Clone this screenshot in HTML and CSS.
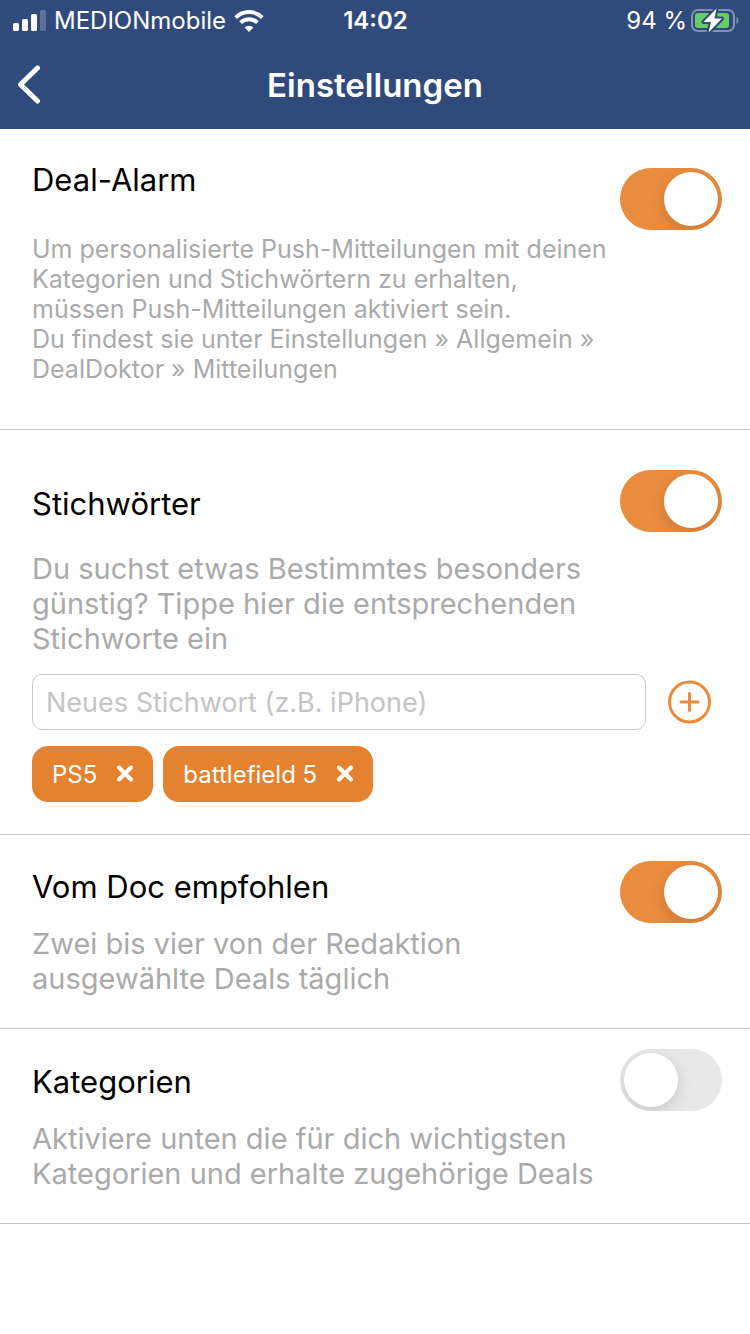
FILE: index.html
```html
<!DOCTYPE html>
<html lang="de">
<head>
<meta charset="utf-8">
<meta name="viewport" content="width=device-width, initial-scale=1">
<title>Einstellungen</title>
<link rel="stylesheet" href="styles.css">
</head>
<body>
<header class="header">
  <div class="status">
    <div class="status-left">
      <svg class="icon" width="34" height="22" viewBox="0 0 34 22" fill="#fff" aria-hidden="true">
        <rect x="1" y="13" width="6" height="8" rx="1.5"/>
        <rect x="10" y="9" width="6" height="12" rx="1.5"/>
        <rect x="19" y="4" width="6" height="17" rx="1.5"/>
        <rect x="28" y="0" width="6" height="21" rx="1.5" opacity=".22"/>
      </svg>
      <span class="carrier">MEDIONmobile</span>
      <svg class="icon" width="30" height="22" viewBox="0 0 30 22" aria-hidden="true">
        <g fill="none" stroke="#fff" stroke-width="4">
          <path d="M1.7 7.6a18.8 18.8 0 0 1 26.6 0"/>
          <path d="M6.600 12.600a11.900 11.900 0 0 1 16.800 0"/>
        </g>
        <path d="M15 22l-4.400-4.600a6.400 6.400 0 0 1 8.800 0z" fill="#fff"/>
      </svg>
    </div>
    <time class="clock">14:02</time>
    <div class="status-right">
      <span>94 %</span>
      <svg class="icon" width="48" height="26" viewBox="0 0 48 26" aria-hidden="true">
        <rect x="1" y="2" width="42" height="21" rx="6" fill="none" stroke="#8292b1" stroke-width="2"/>
        <path d="M45.500 9v7c2.500-1 2.500-6 0-7z" fill="#8292b1"/>
        <rect x="4" y="5" width="34" height="15" rx="3" fill="#65cf65"/>
        <path d="M25.500 0.500L12.500 14h7.500L17.500 24.500 31 10.500h-7.500z" fill="#fff" stroke="#304b7b" stroke-width="4" stroke-linejoin="round" paint-order="stroke"/>
      </svg>
    </div>
  </div>
  <div class="nav">
    <button class="back" type="button" aria-label="Zurück">
      <svg class="icon" width="24" height="40" viewBox="0 0 24 40" fill="none" stroke="#fff" stroke-width="5" stroke-linecap="round" stroke-linejoin="round" aria-hidden="true"><path d="M20.500 3L3.500 19.500 20.500 36"/></svg>
    </button>
    <h1 class="page-title">Einstellungen</h1>
  </div>
</header>
<main>
  <section class="setting setting-alarm">
    <div class="setting-text">
      <h2 class="setting-title"><label for="alarm">Deal-Alarm</label></h2>
      <p class="note">Um personalisierte Push-Mitteilungen mit deinen<br>Kategorien und Stichwörtern zu erhalten,<br>müssen Push-Mitteilungen aktiviert sein.<br>Du findest sie unter Einstellungen » Allgemein »<br>DealDoktor » Mitteilungen</p>
    </div>
    <input class="toggle" type="checkbox" role="switch" id="alarm" checked>
  </section>
  <section class="setting setting-keywords">
    <div class="setting-text">
      <h2 class="setting-title"><label for="keywords">Stichwörter</label></h2>
      <p class="description">Du suchst etwas Bestimmtes besonders<br>günstig? Tippe hier die entsprechenden<br>Stichworte ein</p>
    </div>
    <input class="toggle" type="checkbox" role="switch" id="keywords" checked>
    <form class="keyword-form">
      <input class="keyword-input" type="text" aria-label="Neues Stichwort" placeholder="Neues Stichwort (z.B. iPhone)">
      <button class="add" type="button" aria-label="Hinzufügen">
        <svg class="icon" width="44" height="44" viewBox="0 0 44 44" fill="none" stroke="#ea8c3c" stroke-width="3" stroke-linecap="round" aria-hidden="true"><circle cx="21.500" cy="22" r="20"/><path d="M13 22h17M21.500 13.500v17"/></svg>
      </button>
    </form>
    <div class="chips">
      <button class="chip" type="button">PS5
        <svg class="icon" width="18" height="18" viewBox="0 0 18 18" stroke="#fff" stroke-width="4" stroke-linecap="round" aria-hidden="true"><path d="M3 2.500l12 12M15 2.500L3 14.500"/></svg>
      </button>
      <button class="chip" type="button">battlefield 5
        <svg class="icon" width="18" height="18" viewBox="0 0 18 18" stroke="#fff" stroke-width="4" stroke-linecap="round" aria-hidden="true"><path d="M3 2.500l12 12M15 2.500L3 14.500"/></svg>
      </button>
    </div>
  </section>
  <section class="setting setting-doc">
    <div class="setting-text">
      <h2 class="setting-title"><label for="doc">Vom Doc empfohlen</label></h2>
      <p class="description">Zwei bis vier von der Redaktion<br>ausgewählte Deals täglich</p>
    </div>
    <input class="toggle" type="checkbox" role="switch" id="doc" checked>
  </section>
  <section class="setting setting-categories">
    <div class="setting-text">
      <h2 class="setting-title"><label for="categories">Kategorien</label></h2>
      <p class="description">Aktiviere unten die für dich wichtigsten<br>Kategorien und erhalte zugehörige Deals</p>
    </div>
    <input class="toggle" type="checkbox" role="switch" id="categories">
  </section>
</main>
</body>
</html>
```
FILE: styles.css
```css
* {
  box-sizing: border-box;
}

body {
  margin: 0;
  background: #fff;
  color: #000;
  font-family: Inter, "Liberation Sans", sans-serif;
}

h1, h2, p {
  margin: 0;
}

button, input {
  margin: 0;
  font-family: inherit;
}

button {
  border: 0;
  padding: 0;
  background: none;
  cursor: pointer;
}

.icon {
  display: block;
  flex: none;
}

.header {
  background: #304b7b;
  color: #fff;
}

.status,
.nav {
  display: grid;
  grid-template-columns: 1fr auto 1fr;
  align-items: center;
}

.status {
  height: 41px;
  padding: 0 11px 0 12px;
  font-size: 24px;
  line-height: 40px;
}

.status-left,
.status-right {
  display: flex;
  align-items: center;
  gap: 8px;
}

.status-right {
  justify-content: flex-end;
  gap: 4px;
}

.clock {
  font-weight: 600;
}

.nav {
  height: 88px;
  padding: 0 17px;
}

.back {
  justify-self: start;
}

.page-title {
  font-size: 33px;
  font-weight: 600;
  line-height: 40px;
}

.setting {
  display: grid;
  grid-template-columns: 1fr auto;
  align-items: start;
  padding: 32px 28px 32px 32px;
  border-bottom: 1px solid #c8c8c8;
}

.setting-title {
  margin-bottom: 19px;
  font-size: 31px;
  font-weight: 400;
  line-height: 40px;
}

.note {
  color: #aaa;
  font-size: 25px;
  line-height: 30px;
}

.description {
  color: #aaa;
  font-size: 29px;
  line-height: 35px;
}

.setting-alarm {
  padding-top: 31px;
  padding-bottom: 45px;
}

.setting-alarm .setting-title {
  margin-bottom: 34px;
}

.setting-alarm .toggle {
  margin-top: 8px;
}

.setting-keywords {
  padding-top: 40px;
}

.setting-keywords .setting-text {
  padding-top: 14px;
}

.setting-keywords .setting-title {
  margin-bottom: 27px;
}

.setting-doc {
  padding-top: 26px;
}

.setting-doc .setting-text {
  padding-top: 6px;
}

.setting-categories {
  padding-top: 20px;
}

.setting-categories .setting-text {
  padding-top: 13px;
}

.toggle {
  display: flex;
  appearance: none;
  width: 102px;
  height: 62px;
  padding: 4px;
  border-radius: 31px;
  overflow: hidden;
  background: #e8e8e8;
  cursor: pointer;
}

.toggle::before {
  content: "";
  width: 54px;
  height: 54px;
  border-radius: 50%;
  background: #fff;
  box-shadow: 0 5px 16px rgba(0, 0, 0, .14);
}

.toggle:checked {
  justify-content: flex-end;
  background: #ea8c3e;
}

.keyword-form {
  grid-column: 1 / -1;
  display: flex;
  align-items: center;
  gap: 22px;
  margin-top: 18px;
  padding-right: 10px;
}

.keyword-input {
  flex: 1;
  min-width: 0;
  height: 56px;
  padding: 0 13px;
  border: 1px solid #c8c8c8;
  border-radius: 10px;
  background: #fff;
  font-size: 27px;
}

.keyword-input::placeholder {
  color: #c4c4c4;
}

.chips {
  grid-column: 1 / -1;
  display: flex;
  flex-wrap: wrap;
  gap: 10px;
  margin-top: 16px;
}

.chip {
  display: flex;
  align-items: center;
  gap: 19px;
  height: 56px;
  padding: 0 19px 0 20px;
  border-radius: 16px;
  background: #e5822f;
  color: #fff;
  font-size: 24px;
}
```
